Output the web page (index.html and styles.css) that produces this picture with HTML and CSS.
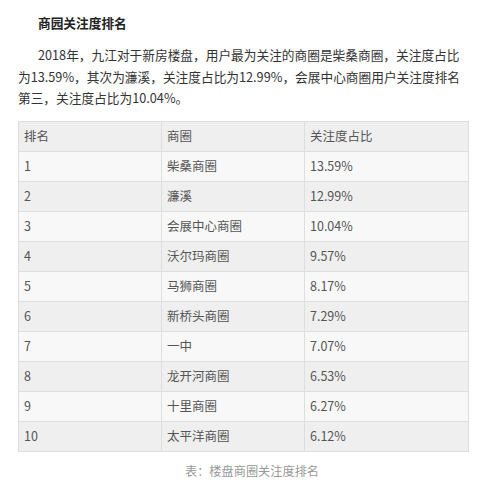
FILE: index.html
```html
<!DOCTYPE html>
<html lang="zh">
<head>
<meta charset="utf-8">
<link rel="stylesheet" href="styles.css">
</head>
<body>
<div class="article">
  <h3 class="title">商园关注度排名</h3>
  <p class="para">2018年，九江对于新房楼盘，用户最为关注的商圈是柴桑商圈，关注度占比为13.59%，其次为濂溪，关注度占比为12.99%，会展中心商圈用户关注度排名第三，关注度占比为10.04%。</p>
  <table class="rank">
    <colgroup><col class="c1"><col class="c2"><col class="c3"></colgroup>
    <thead><tr><th>排名</th><th>商圈</th><th>关注度占比</th></tr></thead>
    <tbody>
      <tr><td>1</td><td>柴桑商圈</td><td>13.59%</td></tr>
      <tr><td>2</td><td>濂溪</td><td>12.99%</td></tr>
      <tr><td>3</td><td>会展中心商圈</td><td>10.04%</td></tr>
      <tr><td>4</td><td>沃尔玛商圈</td><td>9.57%</td></tr>
      <tr><td>5</td><td>马狮商圈</td><td>8.17%</td></tr>
      <tr><td>6</td><td>新桥头商圈</td><td>7.29%</td></tr>
      <tr><td>7</td><td>一中</td><td>7.07%</td></tr>
      <tr><td>8</td><td>龙开河商圈</td><td>6.53%</td></tr>
      <tr><td>9</td><td>十里商圈</td><td>6.27%</td></tr>
      <tr><td>10</td><td>太平洋商圈</td><td>6.12%</td></tr>
    </tbody>
  </table>
  <p class="caption">表：楼盘商圈关注度排名</p>
</div>
</body>
</html>
```
FILE: styles.css
```css
html, body { margin: 0; padding: 0; background: #fff; }
body { font-family: "Noto Sans CJK SC", "Noto Sans", sans-serif; color: #333; }
.article { padding: 12px 10px 0 18px; }
.title { margin: 0 0 0 20px; font-size: 12.7px; font-weight: bold; line-height: 22px; color: #222; }
.para { margin: 10px 0 12px; font-size: 12.7px; line-height: 21.5px; text-indent: 20px; color: #333; }
.rank { width: 450px; border-collapse: collapse; table-layout: fixed; font-size: 12.5px; color: #555; }
.rank .c1 { width: 143px; }
.rank .c2 { width: 143px; }
.rank .c3 { width: 164px; }
.rank th, .rank td { border: 1px solid #dedede; height: 29px; padding: 0 5px; text-align: left; font-weight: normal; line-height: 20px; }
.rank thead tr { background: #efefef; }
.rank tbody tr:nth-child(odd) { background: #f8f8f8; }
.rank tbody tr:nth-child(even) { background: #efefef; }
.caption { margin: 9px 0 0; padding-left: 18px; text-align: center; font-size: 12.2px; color: #999; line-height: 20px; }
```
